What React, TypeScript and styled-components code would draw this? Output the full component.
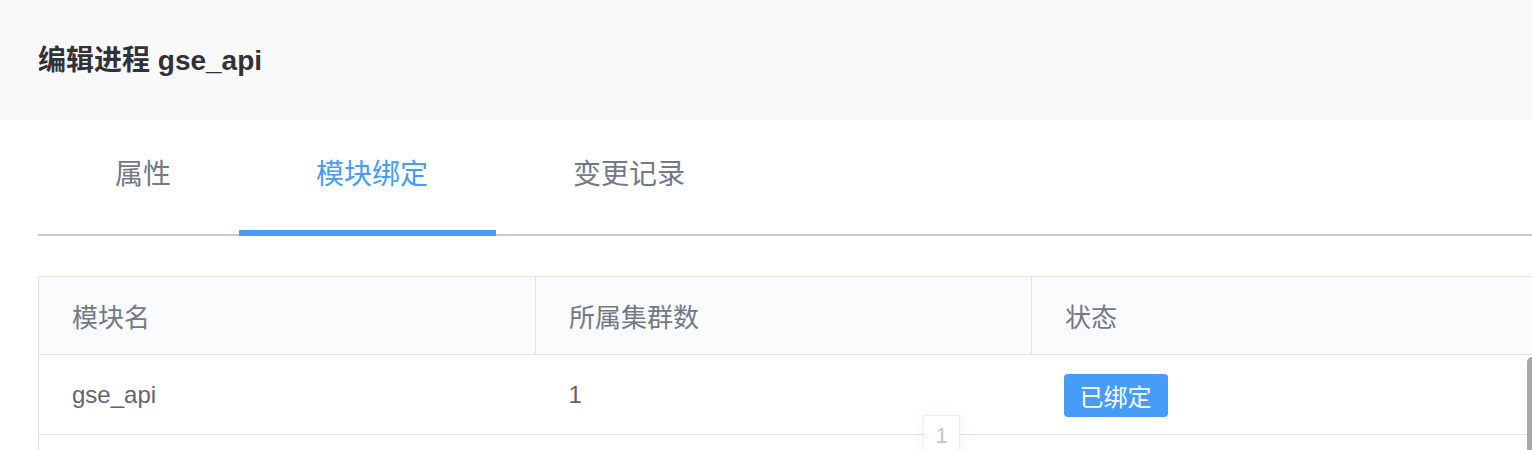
import React from "react";
import styled, { createGlobalStyle } from "styled-components";

const GlobalStyle = createGlobalStyle`
  html, body {
    margin: 0;
    padding: 0;
    background: #ffffff;
  }
  body {
    font-family: "Liberation Sans", "Noto Sans CJK SC", sans-serif;
    -webkit-font-smoothing: antialiased;
  }
`;

const Page = styled.div`
  position: relative;
  width: 1532px;
  height: 450px;
  overflow: hidden;
  background: #ffffff;
`;

const Header = styled.header`
  height: 120px;
  background: #f9f9fa;
  display: flex;
  align-items: center;
  padding-left: 38px;
`;

const Title = styled.h1`
  margin: 0;
  font-size: 28px;
  font-weight: 700;
  color: #313238;
  line-height: 40px;
  margin-top: 2px;
`;

const Body = styled.div`
  padding-left: 38px;
`;

const TabBar = styled.nav`
  display: flex;
  border-bottom: 2px solid #c8ccd4;
`;

const Tab = styled.div<{ $active?: boolean }>`
  position: relative;
  height: 114px;
  box-sizing: border-box;
  padding: 35px 68px 0 77px;
  font-size: 28px;
  line-height: 40px;
  color: ${(p) => (p.$active ? "#479cf8" : "#737987")};
  cursor: pointer;

  &::after {
    content: "";
    display: ${(p) => (p.$active ? "block" : "none")};
    position: absolute;
    left: 0;
    right: 0;
    bottom: -2px;
    height: 6px;
    background: #479cf8;
  }
`;

const Table = styled.table`
  margin-top: 40px;
  width: 1500px;
  border-collapse: collapse;
  table-layout: fixed;
  border-left: 1px solid #dde4eb;
  border-top: 1px solid #dde4eb;
`;

const HeadCell = styled.th`
  height: 77px;
  padding: 0 0 0 33px;
  text-align: left;
  font-weight: 400;
  font-size: 26px;
  color: #737987;
  background: #fafbfd;
  border-bottom: 1px solid #dde4eb;
  border-right: 1px solid #dde4eb;
`;

const Cell = styled.td`
  height: 79px;
  padding: 0 0 0 33px;
  font-size: 24px;
  color: #63656e;
  border-bottom: 1px solid #dde4eb;
`;

const Badge = styled.span`
  display: inline-flex;
  align-items: center;
  height: 43px;
  padding: 0 16px;
  border-radius: 4px;
  background: #479cf8;
  color: #ffffff;
  font-size: 24px;
  margin-top: 1px;
  margin-left: -1px;
`;

const PageTip = styled.div`
  position: absolute;
  left: 923px;
  top: 415px;
  width: 37px;
  height: 40px;
  box-sizing: border-box;
  border: 1px solid #eceef2;
  background: rgba(255, 255, 255, 0.82);
  box-shadow: 0 0 14px rgba(0, 0, 0, 0.05);
  color: #c4c6cc;
  font-size: 22px;
  text-align: center;
  padding-top: 7px;
`;

const ScrollThumb = styled.div`
  position: absolute;
  left: 1527px;
  top: 357px;
  width: 10px;
  height: 120px;
  border-radius: 5px;
  background: #a9a9a9;
`;

const columns = [
  { key: "name", title: "模块名", width: 497 },
  { key: "count", title: "所属集群数", width: 496 },
  { key: "status", title: "状态", width: 507 },
];

export default function App() {
  return (
    <Page>
      <GlobalStyle />
      <Header>
        <Title>编辑进程 gse_api</Title>
      </Header>
      <Body>
        <TabBar>
          <Tab>属性</Tab>
          <Tab $active>模块绑定</Tab>
          <Tab>变更记录</Tab>
        </TabBar>
        <Table>
          <colgroup>
            {columns.map((c) => (
              <col key={c.key} style={{ width: c.width }} />
            ))}
          </colgroup>
          <thead>
            <tr>
              {columns.map((c) => (
                <HeadCell key={c.key}>{c.title}</HeadCell>
              ))}
            </tr>
          </thead>
          <tbody>
            <tr>
              <Cell>gse_api</Cell>
              <Cell>1</Cell>
              <Cell>
                <Badge>已绑定</Badge>
              </Cell>
            </tr>
            <tr>
              <Cell />
              <Cell />
              <Cell />
            </tr>
          </tbody>
        </Table>
      </Body>
      <PageTip>1</PageTip>
      <ScrollThumb />
    </Page>
  );
}
